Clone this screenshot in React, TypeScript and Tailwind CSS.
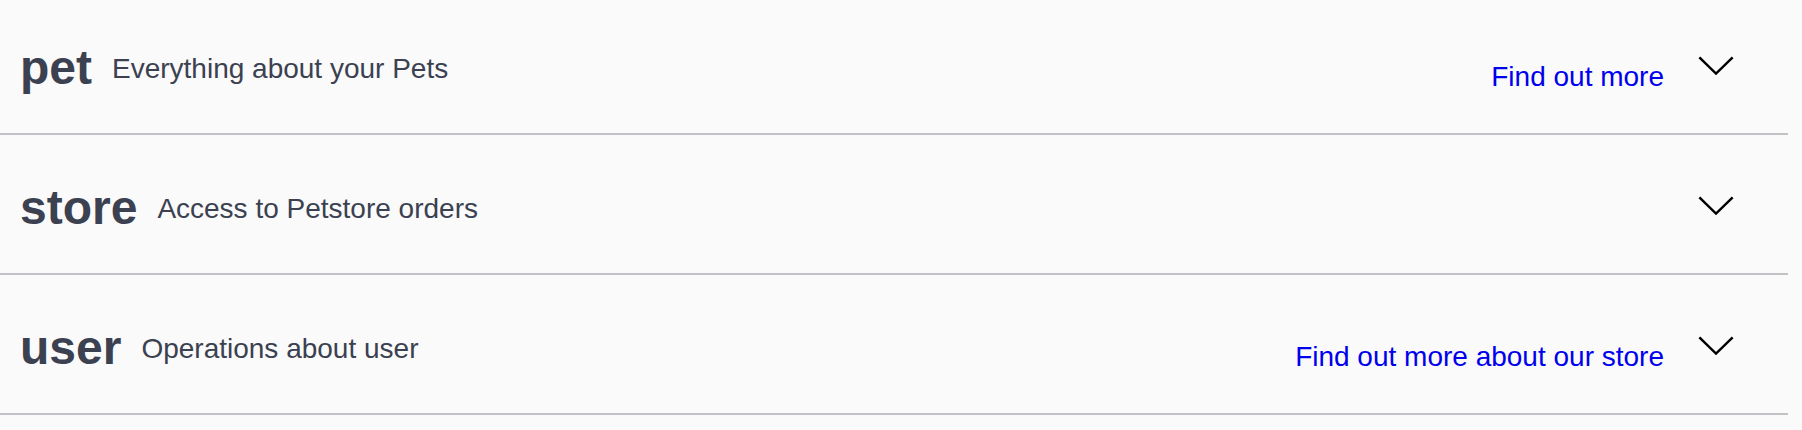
import React from "react";

type Tag = { name: string; desc: string; link?: string };

const tags: Tag[] = [
  { name: "pet", desc: "Everything about your Pets", link: "Find out more" },
  { name: "store", desc: "Access to Petstore orders" },
  { name: "user", desc: "Operations about user", link: "Find out more about our store" },
];

function Chevron() {
  return (
    <svg width="40" height="40" viewBox="0 0 40 40" className="shrink-0 mt-[50px]">
      <polyline
        points="4.2,13.2 20,28.6 35.8,13.2"
        fill="none"
        stroke="#000"
        strokeWidth="2.4"
        strokeLinecap="square"
        strokeLinejoin="miter"
      />
    </svg>
  );
}

export default function App() {
  return (
    <div
      className="w-[1802px] h-[430px] overflow-hidden bg-[#fafafa] text-[#3b4151]"
      style={{ fontFamily: '"Liberation Sans", Arial, sans-serif' }}
    >
      <div className="w-[1788px] mt-[-5px]">
        {tags.map((t) => (
          <div
            key={t.name}
            className="flex items-start h-[140px] box-border border-b-2 border-[#c1c3c7] pl-[20px] pr-[52px]"
          >
            <span className="font-bold text-[48px] leading-[48px] mt-[49px]">{t.name}</span>
            <span className="flex-1 text-[28px] leading-[28px] mt-[60px] pl-[20px]">{t.desc}</span>
            {t.link && (
              <a className="text-[28px] leading-[28px] mt-[68px] text-[#0000ee] mr-[32px]" href="#">
                {t.link}
              </a>
            )}
            <Chevron />
          </div>
        ))}
      </div>
    </div>
  );
}
